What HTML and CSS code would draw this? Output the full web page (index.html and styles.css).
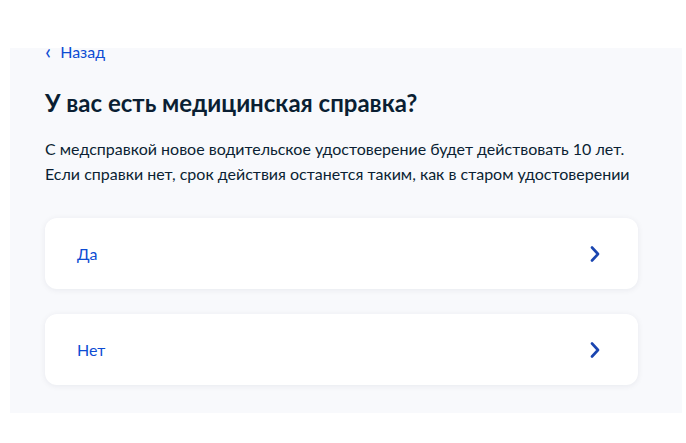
FILE: index.html
```html
<!DOCTYPE html>
<html lang="ru">
<head>
<meta charset="utf-8">
<link rel="stylesheet" href="styles.css">
</head>
<body>
<main class="panel">
  <a class="back" href="#"><span class="back-icon">&#8249;</span>Назад</a>
  <h1 class="title">У вас есть медицинская справка?</h1>
  <p class="lead">С медсправкой новое водительское удостоверение будет действовать 10 лет.<br>Если справки нет, срок действия останется таким, как в старом удостоверении</p>
  <div class="options">
    <a class="option" href="#"><span>Да</span>
      <svg class="chev" width="10" height="16" viewBox="0 0 10 16"><path d="M2 1.5 L8 8 L2 14.5" fill="none" stroke="currentColor" stroke-width="2.6" stroke-linecap="round" stroke-linejoin="round"/></svg>
    </a>
    <a class="option" href="#"><span>Нет</span>
      <svg class="chev" width="10" height="16" viewBox="0 0 10 16"><path d="M2 1.5 L8 8 L2 14.5" fill="none" stroke="currentColor" stroke-width="2.6" stroke-linecap="round" stroke-linejoin="round"/></svg>
    </a>
  </div>
</main>
</body>
</html>
```
FILE: styles.css
```css
html, body {
  margin: 0;
  padding: 0;
  background: #ffffff;
}
body {
  font-family: Lato, "Noto Sans", sans-serif;
  color: #0b1f33;
}
.panel {
  margin: 48px 4px 0 10px;
  height: 365px;
  box-sizing: border-box;
  background: #f8f9fc;
  padding: 0 44px 0 35px;
  display: flex;
  flex-direction: column;
}
.back {
  display: flex;
  align-items: center;
  gap: 9px;
  color: #0d4cd3;
  text-decoration: none;
  font-size: 16px;
  line-height: 10px;
  height: 10px;
  margin-top: -1px;
}
.back-icon {
  font-size: 22px;
  line-height: 10px;
  position: relative;
  top: -1px;
}
.title {
  margin: 31px 0 0;
  font-size: 24px;
  line-height: 30px;
  font-weight: 700;
}
.lead {
  margin: 18px 0 0;
  font-size: 16px;
  line-height: 25px;
}
.options {
  margin-top: 32px;
  display: flex;
  flex-direction: column;
  gap: 25px;
}
.option {
  height: 71px;
  box-sizing: border-box;
  background: #ffffff;
  border-radius: 12px;
  box-shadow: 0 1px 6px rgba(11, 31, 51, 0.07);
  display: flex;
  align-items: center;
  justify-content: space-between;
  padding: 0 38px 0 32px;
  text-decoration: none;
  color: #0d4cd3;
  font-size: 16px;
}
.chev {
  color: #1a45b0;
}
```
